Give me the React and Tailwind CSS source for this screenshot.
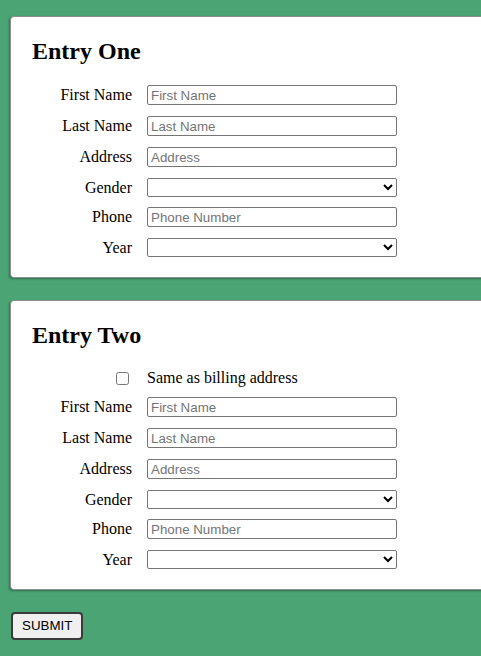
import React from 'react';

const serif = "font-['Liberation_Serif','Times_New_Roman',serif]";
const sans = "font-['Liberation_Sans',Arial,sans-serif]";

const Field = ({ label, placeholder, select }) => {
  return (
    <div className={select ? 'flex h-[19px] items-center mb-[10px] last:mb-0' : 'flex h-5 items-center mb-[11px] last:mb-0'}>
      <label className="w-[100px] text-right text-base leading-[18px] text-black">{label}</label>
      {select ? (
        <select
          className={`ml-[15px] h-[19px] w-[250px] rounded-[2px] border border-[#767676] bg-white text-[13.33px] leading-none text-black ${sans}`}
        >
          <option value=""></option>
        </select>
      ) : (
        <input
          type="text"
          placeholder={placeholder}
          className={`ml-[15px] h-5 w-[250px] rounded-[2px] border border-[#767676] bg-white px-[3px] text-[13.33px] leading-none text-black placeholder:text-[#757575] ${sans}`}
        />
      )}
    </div>
  );
};

const EntryCard = ({ title, showSame }) => {
  return (
    <div className="ml-[10px] w-[600px] rounded-[4px] border border-[#8f8f8f] bg-white pt-5 pb-5 pl-[21px] shadow-[-1px_1px_2px_rgba(0,0,0,0.35)]">
      <h2 className="mb-5 text-2xl leading-[28px] font-bold text-black">{title}</h2>
      {showSame && (
        <div className="mb-[10px] flex h-[18px] items-center">
          <div className="flex w-[100px] justify-end">
            <input type="checkbox" className="mr-[3px] h-[13px] w-[13px]" />
          </div>
          <span className="ml-[15px] text-base leading-[18px] text-black">Same as billing address</span>
        </div>
      )}
      <div>
        <Field label="First Name" placeholder="First Name" />
        <Field label="Last Name" placeholder="Last Name" />
        <Field label="Address" placeholder="Address" />
        <Field label="Gender" select />
        <Field label="Phone" placeholder="Phone Number" />
        <Field label="Year" select />
      </div>
    </div>
  );
};

const App = () => {
  return (
    <div className={`min-h-screen overflow-hidden bg-[#4aa474] pt-4 ${serif}`}>
      <EntryCard title="Entry One" />
      <div className="mt-[22px]">
        <EntryCard title="Entry Two" showSame />
      </div>
      <button
        type="button"
        className={`mt-[22px] ml-[11px] h-7 rounded-[4px] border-2 border-[#3a3a3a] bg-[#efefef] px-[9px] text-[13.33px] text-black ${sans}`}
      >
        SUBMIT
      </button>
    </div>
  );
};

export default App;
